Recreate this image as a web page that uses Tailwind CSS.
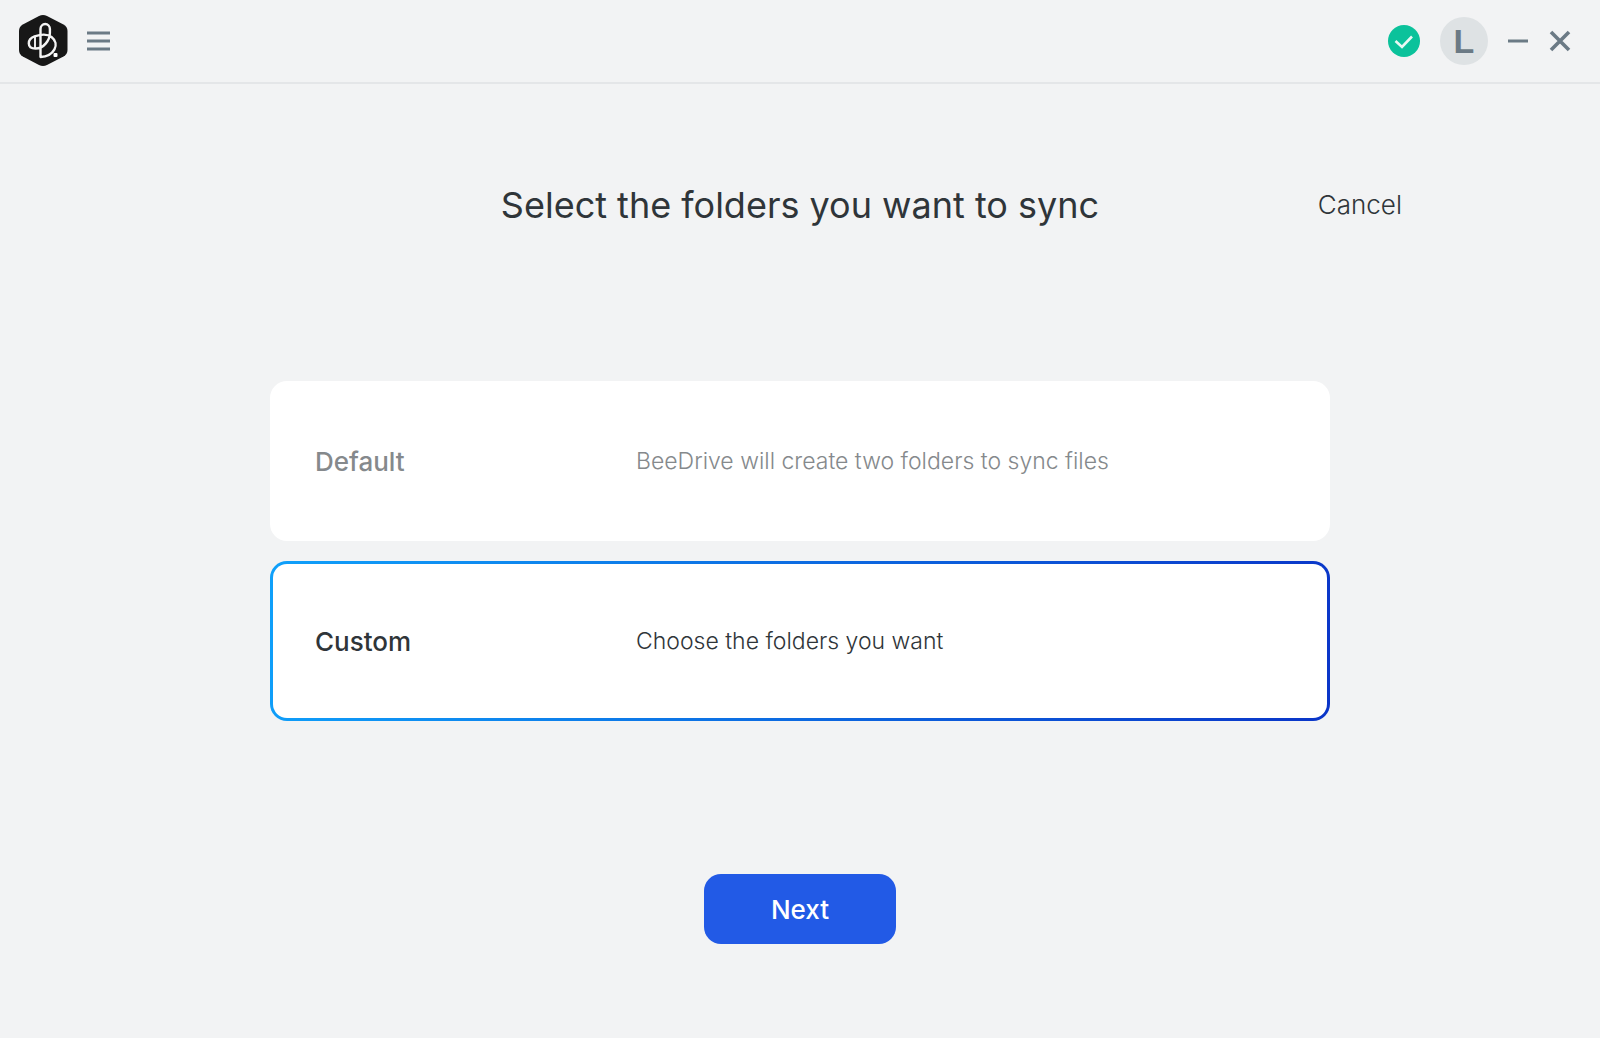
<!DOCTYPE html>
<html lang="en">
<head>
  <meta charset="UTF-8">
  <meta name="viewport" content="width=device-width, initial-scale=1.0">
  <title>BeeDrive</title>
  <script src="https://cdn.jsdelivr.net/npm/@tailwindcss/browser@4"></script>
</head>
<body class="min-h-screen bg-[#f2f3f4] font-['Inter',sans-serif] text-[#2f3539]">
  <!-- Title bar -->
  <header class="flex items-center justify-between border-b-2 border-[#e4e6e8] pl-[18px] pr-[29px] h-[84px]">
    <div class="flex items-center gap-[18px]">
      <svg class="w-[50px] h-[54px]" viewBox="0 0 50 54" fill="none" role="img" aria-label="BeeDrive">
        <path d="M21 2Q25 0 29 2L45.500 10.500Q49.500 12.800 49.500 17V36Q49.500 40.300 45.500 42.500L29 51Q25 53 21 51L4.800 42.500Q1 40.300 1 36V17Q1 12.800 4.800 10.500Z" fill="#171717"/>
        <g stroke="#f4f4f4" stroke-width="2.400" stroke-linecap="round" stroke-linejoin="round">
          <path d="M22.500 22V15A4.700 5 0 0 1 31.900 15V19C31.900 26 26 34.500 17.500 34.500C8.500 34.500 9 25 16.500 22.300C23 20.200 30 20.200 33.500 23C42.500 30 36 42.300 22.500 43V22"/>
          <path d="M17 22.800V34" stroke-width="1.900"/>
        </g>
        <rect x="35.500" y="39" width="4" height="4" rx="1" fill="#fff"/>
      </svg>
      <button type="button" aria-label="Menu" class="text-[#6b7a85]">
        <svg class="w-[25px] h-[22px]" viewBox="0 0 25 22" fill="none" stroke="currentColor" stroke-width="3">
          <path d="M1 3H24M1 11H24M1 19H24"/>
        </svg>
      </button>
    </div>

    <div class="flex items-center text-[#6b7a85]">
      <svg class="w-8 h-8" viewBox="0 0 32 32" fill="none" role="img" aria-label="Connected">
        <circle cx="16" cy="16" r="16" fill="#0bc29b"/>
        <path d="M7.500 16L14 22L24 11.500" stroke="#e9f8f4" stroke-width="2.600"/>
      </svg>
      <button type="button" aria-label="Account" class="ml-[20px] flex size-12 items-center justify-center rounded-full bg-[#dee2e4] font-['Liberation_Sans',sans-serif] text-[34px] font-bold leading-none">L</button>
      <button type="button" aria-label="Minimize" class="ml-[19px]">
        <svg class="size-[22px]" viewBox="0 0 22 22" stroke="currentColor" stroke-width="3"><path d="M1 11H21"/></svg>
      </button>
      <button type="button" aria-label="Close" class="ml-[20px]">
        <svg class="size-[22px]" viewBox="0 0 22 22" stroke="currentColor" stroke-width="3.600"><path d="M2 2L20 20M20 2L2 20"/></svg>
      </button>
    </div>
  </header>

  <main class="px-8 pt-[97px] pb-16">
    <div class="mx-auto grid max-w-[1204px] grid-cols-[1fr_auto_1fr] items-center">
      <h1 class="col-start-2 text-[36px] leading-[48px]">Select the folders you want to sync</h1>
      <button type="button" class="justify-self-end text-[26px] leading-[48px] font-light">Cancel</button>
    </div>

    <form>
      <!-- Sync mode -->
      <div class="mx-auto mt-[152px] flex max-w-[1060px] flex-col gap-5">
        <label class="block rounded-[17px] bg-white p-[3px] text-[#85898c] has-checked:bg-linear-[100deg] has-checked:from-[#0fa0fa] has-checked:to-[#0a35c8] has-checked:text-[#2f3539]">
          <input type="radio" name="mode" value="default" class="sr-only">
          <span class="flex h-[154px] items-center rounded-[14px] bg-white px-[42px]">
            <span class="w-[321px] text-[26px] font-medium">Default</span>
            <span class="text-[23px] font-light">BeeDrive will create two folders to sync files</span>
          </span>
        </label>
        <label class="block rounded-[17px] bg-white p-[3px] text-[#85898c] has-checked:bg-linear-[100deg] has-checked:from-[#0fa0fa] has-checked:to-[#0a35c8] has-checked:text-[#2f3539]">
          <input type="radio" name="mode" value="custom" class="sr-only" checked>
          <span class="flex h-[154px] items-center rounded-[14px] bg-white px-[42px]">
            <span class="w-[321px] text-[26px] font-medium">Custom</span>
            <span class="text-[23px] font-light">Choose the folders you want</span>
          </span>
        </label>
      </div>

      <button type="button" class="mx-auto mt-[153px] block h-[70px] w-[192px] rounded-[17px] bg-[#225ae6] text-[26px] font-medium text-white">Next</button>
    </form>
  </main>
</body>
</html>
